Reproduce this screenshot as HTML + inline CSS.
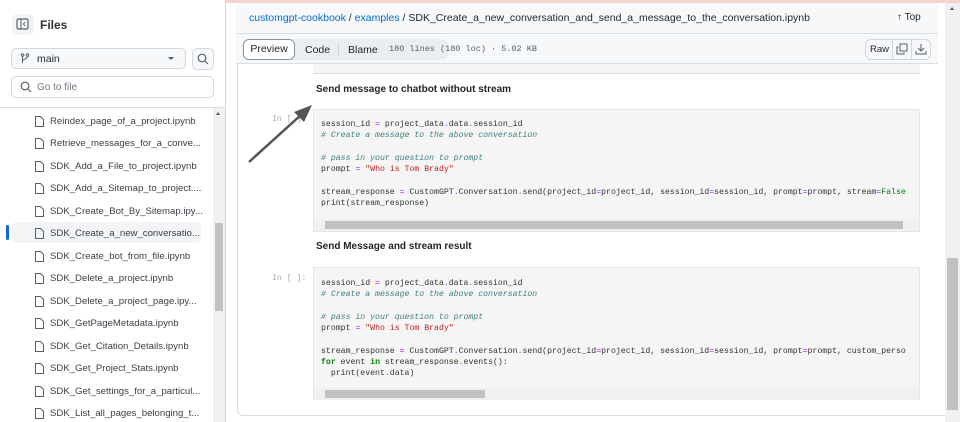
<!DOCTYPE html>
<html><head><style>
*{margin:0;padding:0;box-sizing:border-box}
body{width:960px;height:422px;overflow:hidden;background:#fff;font-family:"Liberation Sans",sans-serif;position:relative;color:#1f2328}
.abs{position:absolute}
.side{left:0;top:0;width:226px;height:422px;background:#fff;border-right:1px solid #d0d7de}
.item{position:absolute;left:34px;font-size:9.6px;color:#3a3f45;white-space:nowrap}
.item svg{position:absolute;left:0;top:-1px}
.item span{position:absolute;left:16px;top:0}
.code{font-family:"Liberation Mono",monospace;font-size:8.2px;line-height:11.3px;color:#333;white-space:pre}
.k{color:#008000;font-weight:bold}.o{color:#aa22ff}.c{color:#408080;font-style:italic}.s{color:#ba2121}.f{color:#008000}
</style></head><body>
<div class="abs" style="left:0;top:0;width:960px;height:3px;background:#f3d3cc"></div>
<div class="abs side">
 <div class="abs" style="left:12px;top:14px;width:22px;height:21px;background:#f3f4f6;border-radius:5px"></div>
 <svg class="abs" style="left:16px;top:18px" width="13" height="12"><rect x="1" y="1" width="11" height="10" rx="1.5" fill="none" stroke="#57606a" stroke-width="1.2"/><line x1="5" y1="1" x2="5" y2="11" stroke="#57606a"/><path d="M9 4 L7.5 6 L9 8" fill="none" stroke="#57606a"/></svg>
 <div class="abs" style="left:40px;top:18px;font-size:12px;font-weight:bold;color:#333">Files</div>
 <div class="abs" style="left:11px;top:48px;width:175px;height:21px;background:#f6f8fa;border:1px solid #d0d7de;border-radius:5px"></div>
 <svg class="abs" style="left:20px;top:53px" width="10" height="11"><circle cx="2.5" cy="2" r="1.3" fill="none" stroke="#57606a"/><circle cx="7.5" cy="2" r="1.3" fill="none" stroke="#57606a"/><path d="M2.5 3.5V10M7.5 3.5C7.5 6 2.5 6 2.5 8" fill="none" stroke="#57606a"/></svg>
 <div class="abs" style="left:37px;top:53px;font-size:10.5px;color:#24292f">main</div>
 <div class="abs" style="left:168px;top:57px;border-left:3px solid transparent;border-right:3px solid transparent;border-top:3px solid #57606a"></div>
 <div class="abs" style="left:192px;top:48px;width:22px;height:22px;background:#f6f8fa;border:1px solid #d0d7de;border-radius:5px"></div>
 <svg class="abs" style="left:197px;top:53px" width="12" height="12"><circle cx="5" cy="5" r="3.8" fill="none" stroke="#57606a" stroke-width="1.2"/><line x1="8" y1="8" x2="11" y2="11" stroke="#57606a" stroke-width="1.2"/></svg>
 <div class="abs" style="left:11px;top:76px;width:203px;height:22px;border:1px solid #d0d7de;border-radius:5px"></div>
 <svg class="abs" style="left:20px;top:81px" width="12" height="12"><circle cx="5" cy="5" r="3.8" fill="none" stroke="#57606a" stroke-width="1.2"/><line x1="8" y1="8" x2="11" y2="11" stroke="#57606a" stroke-width="1.2"/></svg>
 <div class="abs" style="left:37px;top:82px;font-size:10px;color:#6e7781">Go to file</div>
 <div class="abs" style="left:0;top:107px;width:226px;height:1px;background:#d8dee4"></div>
 <div class="abs" style="left:213px;top:108px;width:12px;height:314px;background:#f1f1f1"></div>
 <div class="abs" style="left:215px;top:223px;width:8px;height:88px;background:#c1c1c1"></div>
 <div class="abs" style="left:216px;top:112px;border-left:2px solid transparent;border-right:2px solid transparent;border-bottom:3px solid #555"></div>
 <div class="abs" style="left:12px;top:222px;width:189px;height:21px;background:#f2f4f6;border-radius:5px"></div>
 <div class="abs" style="left:6px;top:225px;width:3px;height:15px;background:#0969da;border-radius:2px"></div>
</div>
<div class="abs" style="left:226px;top:3px;width:719px;height:419px;background:#fff"></div>
<div class="abs" style="left:236px;top:3px;width:702px;height:31px;background:#f6f8fa;border-bottom:1px solid #d8dee4"></div>
<div class="abs" style="left:249px;top:12px;font-size:10.5px;color:#24292f;white-space:nowrap"><span style="color:#0969da">customgpt-cookbook</span> / <span style="color:#0969da">examples</span> / SDK_Create_a_new_conversation_and_send_a_message_to_the_conversation.ipynb</div>
<div class="abs" style="left:897px;top:12px;font-size:10px;color:#24292f">↑ Top</div>
<div class="abs" style="left:236px;top:34px;width:702px;height:30px;background:#f6f8fa;border-bottom:1px solid #d8dee4"></div>
<div class="abs" style="left:242px;top:39px;width:206px;height:21px;background:#eaeef2;border-radius:6px"></div>
<div class="abs" style="left:243px;top:39px;width:52px;height:21px;background:#fff;border:1px solid #8c959f;border-radius:6px;font-size:10.5px;text-align:center;line-height:19px">Preview</div>
<div class="abs" style="left:305px;top:44px;font-size:10.5px">Code</div>
<div class="abs" style="left:338px;top:43px;width:1px;height:13px;background:#d0d7de"></div>
<div class="abs" style="left:348px;top:44px;font-size:10.5px">Blame</div>
<div class="abs code" style="left:389px;top:44px;color:#57606a;font-size:8.5px">180 lines (180 loc) · 5.02 KB</div>
<div class="abs" style="left:865px;top:39px;width:66px;height:21px;background:#f6f8fa;border:1px solid #d0d7de;border-radius:6px"></div>
<div class="abs" style="left:870px;top:44px;font-size:9.5px">Raw</div>
<div class="abs" style="left:892px;top:40px;width:1px;height:19px;background:#d0d7de"></div>
<div class="abs" style="left:911px;top:40px;width:1px;height:19px;background:#d0d7de"></div>
<svg class="abs" style="left:896px;top:43px" width="12" height="12"><rect x="4" y="1" width="7" height="7" fill="none" stroke="#57606a"/><path d="M2.5 4H1v7h7V9.5" fill="none" stroke="#57606a"/></svg>
<svg class="abs" style="left:915px;top:43px" width="12" height="12"><path d="M6 1v7M3 5l3 3 3-3M1 8v3h10V8" fill="none" stroke="#57606a"/></svg>
<div class="abs" style="left:237px;top:64px;width:713px;height:352px;border:1px solid #d8dee4;border-top:none;border-radius:0 0 6px 6px"></div>
<div class="abs" style="left:313px;top:64px;width:607px;height:10px;background:#f5f5f5;border-bottom:1px solid #e0e0e0"></div>
<div class="abs" style="left:316px;top:84px;font-size:10px;font-weight:bold">Send message to chatbot without stream</div>
<div class="abs code" style="left:272px;top:114px;color:#aaa">In [ ]:</div>
<div class="abs" style="left:313px;top:109px;width:607px;height:123px;background:#f5f5f5;border:1px solid #e6e6e6"></div>
<div class="abs code" style="left:321px;top:119px;width:597px;overflow:hidden">session_id <span class="o">=</span> project_data<span class="o">.</span>data<span class="o">.</span>session_id
<span class="c"># Create a message to the above conversation</span>

<span class="c"># pass in your question to prompt</span>
prompt <span class="o">=</span> <span class="s">"Who is Tom Brady"</span>

stream_response <span class="o">=</span> CustomGPT<span class="o">.</span>Conversation<span class="o">.</span>send(project_id<span class="o">=</span>project_id, session_id<span class="o">=</span>session_id, prompt<span class="o">=</span>prompt, stream<span class="o">=</span><span class="f">False</span>
print(stream_response)</div>
<div class="abs" style="left:314px;top:219px;width:605px;height:12px;background:#f0f0f0"></div>
<div class="abs" style="left:325px;top:221px;width:578px;height:8px;background:#c1c1c1"></div>
<div class="abs" style="left:316px;top:241px;font-size:10px;font-weight:bold">Send Message and stream result</div>
<div class="abs code" style="left:272px;top:273px;color:#aaa">In [ ]:</div>
<div class="abs" style="left:313px;top:267px;width:607px;height:133px;background:#f5f5f5;border:1px solid #e6e6e6"></div>
<div class="abs code" style="left:321px;top:278px;width:597px;overflow:hidden">session_id <span class="o">=</span> project_data<span class="o">.</span>data<span class="o">.</span>session_id
<span class="c"># Create a message to the above conversation</span>

<span class="c"># pass in your question to prompt</span>
prompt <span class="o">=</span> <span class="s">"Who is Tom Brady"</span>

stream_response <span class="o">=</span> CustomGPT<span class="o">.</span>Conversation<span class="o">.</span>send(project_id<span class="o">=</span>project_id, session_id<span class="o">=</span>session_id, prompt<span class="o">=</span>prompt, custom_perso
<span class="k">for</span> event <span class="k">in</span> stream_response<span class="o">.</span>events():
  print(event<span class="o">.</span>data)</div>
<div class="abs" style="left:314px;top:388px;width:605px;height:12px;background:#f0f0f0"></div>
<div class="abs" style="left:325px;top:390px;width:160px;height:8px;background:#c1c1c1"></div>
<div class="abs" style="left:945px;top:3px;width:15px;height:419px;background:#f1f1f1"></div>
<div class="abs" style="left:947px;top:258px;width:11px;height:152px;background:#c1c1c1"></div>
<div class="abs" style="left:950px;top:7px;border-left:2px solid transparent;border-right:2px solid transparent;border-bottom:3px solid #555"></div>
<svg class="abs" style="left:240px;top:100px" width="80" height="70"><line x1="9" y1="62" x2="62" y2="14" stroke="#555" stroke-width="2.5"/><polygon points="72,5 54,12 64,22" fill="#555"/></svg>
<div class="abs item" style="top:116px"><svg width="11" height="13"><path d="M1.5 1.5h5l3 3v7h-8z" fill="none" stroke="#57606a"/></svg><span>Reindex_page_of_a_project.ipynb</span></div>
<div class="abs item" style="top:138px"><svg width="11" height="13"><path d="M1.5 1.5h5l3 3v7h-8z" fill="none" stroke="#57606a"/></svg><span>Retrieve_messages_for_a_conve...</span></div>
<div class="abs item" style="top:161px"><svg width="11" height="13"><path d="M1.5 1.5h5l3 3v7h-8z" fill="none" stroke="#57606a"/></svg><span>SDK_Add_a_File_to_project.ipynb</span></div>
<div class="abs item" style="top:183px"><svg width="11" height="13"><path d="M1.5 1.5h5l3 3v7h-8z" fill="none" stroke="#57606a"/></svg><span>SDK_Add_a_Sitemap_to_project....</span></div>
<div class="abs item" style="top:206px"><svg width="11" height="13"><path d="M1.5 1.5h5l3 3v7h-8z" fill="none" stroke="#57606a"/></svg><span>SDK_Create_Bot_By_Sitemap.ipy...</span></div>
<div class="abs item" style="top:228px"><svg width="11" height="13"><path d="M1.5 1.5h5l3 3v7h-8z" fill="none" stroke="#57606a"/></svg><span>SDK_Create_a_new_conversatio...</span></div>
<div class="abs item" style="top:251px"><svg width="11" height="13"><path d="M1.5 1.5h5l3 3v7h-8z" fill="none" stroke="#57606a"/></svg><span>SDK_Create_bot_from_file.ipynb</span></div>
<div class="abs item" style="top:273px"><svg width="11" height="13"><path d="M1.5 1.5h5l3 3v7h-8z" fill="none" stroke="#57606a"/></svg><span>SDK_Delete_a_project.ipynb</span></div>
<div class="abs item" style="top:296px"><svg width="11" height="13"><path d="M1.5 1.5h5l3 3v7h-8z" fill="none" stroke="#57606a"/></svg><span>SDK_Delete_a_project_page.ipy...</span></div>
<div class="abs item" style="top:318px"><svg width="11" height="13"><path d="M1.5 1.5h5l3 3v7h-8z" fill="none" stroke="#57606a"/></svg><span>SDK_GetPageMetadata.ipynb</span></div>
<div class="abs item" style="top:341px"><svg width="11" height="13"><path d="M1.5 1.5h5l3 3v7h-8z" fill="none" stroke="#57606a"/></svg><span>SDK_Get_Citation_Details.ipynb</span></div>
<div class="abs item" style="top:363px"><svg width="11" height="13"><path d="M1.5 1.5h5l3 3v7h-8z" fill="none" stroke="#57606a"/></svg><span>SDK_Get_Project_Stats.ipynb</span></div>
<div class="abs item" style="top:386px"><svg width="11" height="13"><path d="M1.5 1.5h5l3 3v7h-8z" fill="none" stroke="#57606a"/></svg><span>SDK_Get_settings_for_a_particul...</span></div>
<div class="abs item" style="top:408px"><svg width="11" height="13"><path d="M1.5 1.5h5l3 3v7h-8z" fill="none" stroke="#57606a"/></svg><span>SDK_List_all_pages_belonging_t...</span></div>
</body></html>
